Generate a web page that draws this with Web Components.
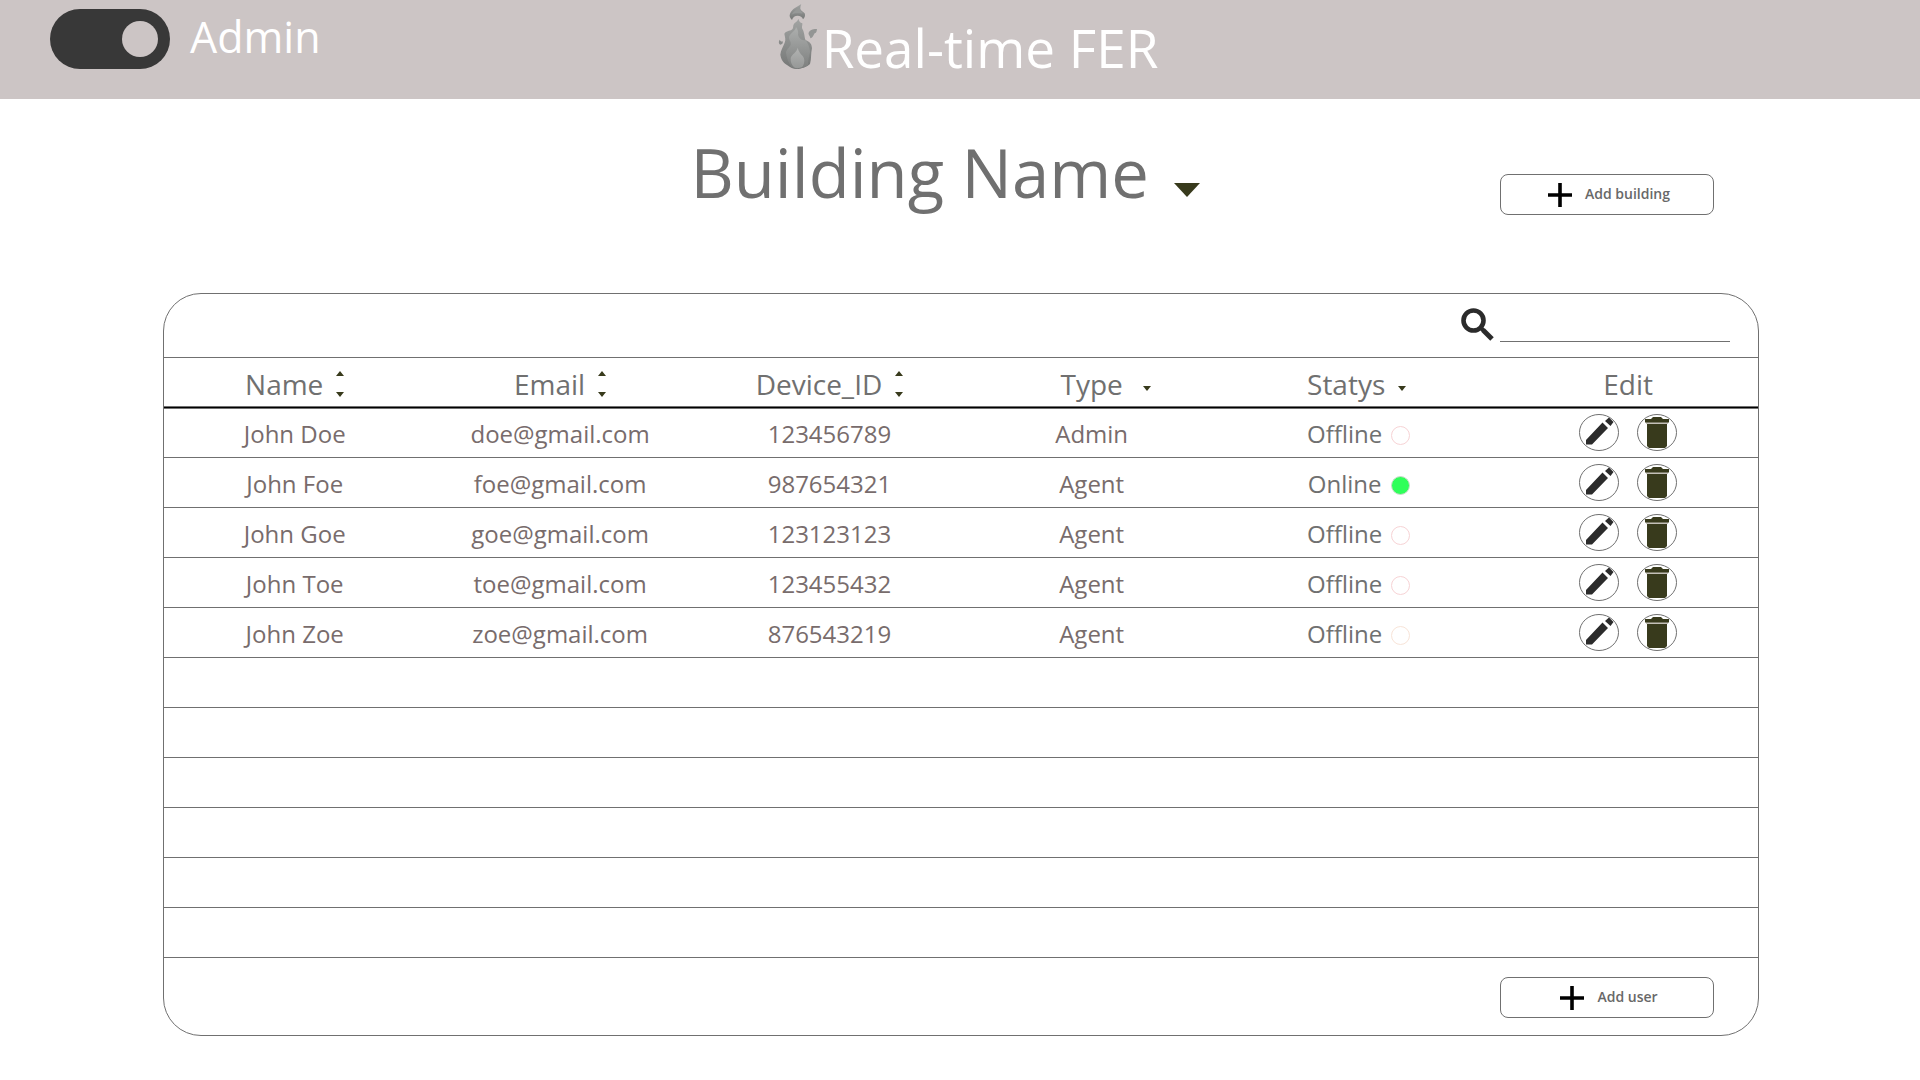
<!DOCTYPE html>
<html lang="en">
<head>
<meta charset="utf-8">
<title>Real-time FER</title>
<style>
  html, body { margin: 0; background: #fff; }
  body {
    font-family: "Open Sans", "Noto Sans", sans-serif;
    color: #707070;
    --line: #707070;
    --olive: #383a1c;
    --body-text: #786c6c;
  }
</style>
</head>
<body>
<fer-app></fer-app>

<template id="t-app">
  <style>
    :host { display: flex; flex-direction: column; min-height: 100vh; }
    .title { display: grid; grid-template-columns: 1fr auto 1fr; align-items: start; height: 194px; box-sizing: border-box; padding: 28px 206px 0 176px; }
    building-select { grid-column: 2; }
    .title add-button { justify-self: end; margin-top: 47px; }
    user-panel { margin: 0 161px 44px 163px; }
  </style>
  <app-header><admin-switch slot="start">Admin</admin-switch><brand-mark>Real-time FER</brand-mark></app-header>
  <main>
    <section class="title">
      <building-select></building-select>
      <add-button>Add building</add-button>
    </section>
    <user-panel></user-panel>
  </main>
</template>

<template id="t-header">
  <style>
    :host { display: block; }
    header { display: grid; grid-template-columns: 1fr auto 1fr; align-items: start; height: 99px; padding: 0 50px; background: #ccc5c5; color: #fff; }
  </style>
  <header><slot name="start"></slot><slot></slot></header>
</template>

<template id="t-switch">
  <style>
    :host { display: block; padding-top: 7px; }
    label { display: inline-flex; align-items: start; gap: 20px; font-size: 43px; line-height: 60px; cursor: pointer; }
    input { appearance: none; margin: 2px 0 0; width: 120px; height: 60px; border-radius: 30px; background: #383838; padding: 12px; box-sizing: border-box; display: flex; }
    input:checked { justify-content: flex-end; }
    input::before { content: ""; width: 36px; height: 36px; border-radius: 50%; background: #ccc5c5; }
  </style>
  <label><input type="checkbox" role="switch" checked><span><slot></slot></span></label>
</template>

<template id="t-brand">
  <style>
    :host { display: flex; align-items: start; gap: 4px; padding-left: 16px; }
    svg { width: 40px; height: 70px; }
    h1 { margin: 18px 0 0; font-size: 53px; line-height: 60px; font-weight: 400; white-space: nowrap; }
  </style>
  <svg viewBox="24 0 120 210" aria-hidden="true">
    <defs>
      <linearGradient id="a" x1="0" y1="0" x2="0" y2="1"><stop offset="0" stop-color="#a2a4a3"/><stop offset="1" stop-color="#757776"/></linearGradient>
      <linearGradient id="b" x1="0" y1="0" x2="0" y2="1"><stop offset="0" stop-color="#adafae"/><stop offset="1" stop-color="#7d7f7e"/></linearGradient>
      <linearGradient id="c" x1="0" y1="0" x2="0" y2="1"><stop offset="0" stop-color="#b2b3b2"/><stop offset="1" stop-color="#969897"/></linearGradient>
    </defs>
    <path fill="url(#a)" d="M94 12C82 20 66 26 60 41C57 48 60 54 66 60C68 51 75 47 83 47C91 47 97 51 99 58C104 53 107 47 104 40C100 35 93 32 91 27C91 21 92 17 94 12Z"/>
    <path fill="#979998" d="M90 20C80 28 69 34 65 44C75 37 88 41 100 40C92 33 88 29 90 20Z"/>
    <path fill="url(#a)" d="M85 56C83 66 72 67 70 76C69 82 70 88 63 91C54 94 47 94 43 101C45 111 48 119 44 128C40 139 32 151 31 164C33 177 38 187 51 195C62 203 69 207 80 207C96 207 111 200 120 192C125 176 122 161 126 145C125 132 121 127 108 121C103 117 105 104 99 90C93 82 98 77 97 70C90 68 87 63 85 56Z"/>
    <path fill="url(#b)" d="M78 81C76 95 57 101 57 113C57 120 64 125 62 134C58 143 49 148 48 158C50 174 55 187 64 200C77 209 101 206 114 195C114 181 117 171 120 156C120 144 114 130 107 120C93 123 88 114 84 105C86 96 83 88 78 81Z"/>
    <path fill="url(#c)" d="M83 143C81 156 65 163 62 174C61 187 66 195 72 202C80 207 94 204 99 198C105 187 104 175 98 168C90 160 86 154 83 143Z"/>
    <path fill="#939594" d="M141 87C130 86 118 91 116 98C114 105 121 107 121 115C129 114 130 105 134 100C140 98 140 93 141 87Z"/>
    <path fill="#898b8a" d="M29 119C25 125 26 132 31 134C36 134 40 130 38 124C34 125 31 123 29 119Z"/>
  </svg>
  <h1><slot></slot></h1>
</template>

<template id="t-building">
  <style>
    :host { display: block; }
    div { display: grid; align-items: end; }
    select, svg { grid-area: 1 / 1; }
    select { appearance: none; border: 0; margin: 0; padding: 0 50px 0 0; background: none; font: inherit; font-size: 67px; line-height: 90px; height: 90px; color: #707070; cursor: pointer; }
    svg { justify-self: end; width: 26px; height: 14px; margin-bottom: 20px; fill: var(--olive); pointer-events: none; }
  </style>
  <div>
    <select aria-label="Building"><option>Building Name</option></select>
    <svg viewBox="0 0 26 14" aria-hidden="true"><path d="M0 0H26L13 14Z"/></svg>
  </div>
</template>

<template id="t-add">
  <style>
    :host { display: block; }
    button { display: flex; align-items: center; justify-content: center; gap: 13px; width: 214px; height: 41px; border: 1px solid var(--line); border-radius: 8px; background: #fff; padding: 0 0 0 4px; font: inherit; font-size: 14px; line-height: 20px; font-weight: 600; color: #686868; cursor: pointer; }
    svg { width: 24px; height: 24px; stroke: #000; stroke-width: 3.6; }
    span { padding-bottom: 1px; }
  </style>
  <button type="button"><svg viewBox="0 0 24 24" aria-hidden="true"><path d="M12 0V24M0 12H24"/></svg><span><slot></slot></span></button>
</template>

<template id="t-search">
  <style>
    :host { display: block; }
    label { display: flex; align-items: start; gap: 6px; }
    svg { width: 33px; height: 33px; margin-top: 2px; }
    input { width: 230px; height: 36px; box-sizing: border-box; border: 0; border-bottom: 1px solid var(--line); border-radius: 0; padding: 0 4px; background: none; font: inherit; font-size: 24px; color: inherit; outline: 0; }
  </style>
  <label>
    <svg viewBox="0 0 33 33" fill="none" stroke="#2b2b2b" aria-hidden="true"><circle cx="12.5" cy="12.5" r="10" stroke-width="4.6"/><path d="M20 20L22.500 22.500" stroke-width="4"/><path d="M22 22L31 31" stroke-width="5"/></svg>
    <input type="text" aria-label="Search">
  </label>
</template>

<template id="t-heading">
  <style>
    :host { display: block; }
    button { display: flex; align-items: center; justify-content: center; gap: 13px; width: 100%; border: 0; margin: 0; padding: 2px 0 0; background: none; font: inherit; font-size: 28px; line-height: 38px; color: #707070; cursor: pointer; }
    svg { width: 8px; height: 26px; fill: var(--olive); }
    .down { display: none; }
    :host([kind="filter"]) .sort, :host([kind="plain"]) .sort { display: none; }
    :host([kind="filter"]) .down { display: block; }
    :host([kind="filter"]) button { padding-right: 4px; }
    :host([balanced]) button { display: grid; grid-template-columns: 1fr auto 1fr; gap: 20px; padding-right: 0; }
    :host([balanced]) span { grid-column: 2; }
  </style>
  <button type="button"><span><slot></slot></span>
    <svg class="sort" viewBox="0 0 8 26" aria-hidden="true"><path d="M0 5L4 0L8 5ZM0 21H8L4 26Z"/></svg>
    <svg class="down" viewBox="0 0 8 26" aria-hidden="true"><path d="M0 15H8L4 20Z"/></svg>
  </button>
</template>

<template id="t-status">
  <style>
    :host { display: flex; align-items: center; justify-content: center; gap: 9px; color: #707070; }
    i { width: 17px; height: 17px; margin-top: 4px; border: 1px solid #f7d3d5; border-radius: 50%; }
    :host([state="online"]) i { background: #2fff5a; border-color: #c9dcc9; }
    :host([state="idle"]) i { border-color: #f8e4d8; }
  </style>
  <span><slot></slot></span><i></i>
</template>

<template id="t-actions">
  <style>
    :host { display: flex; justify-content: center; gap: 18px; }
    button { border: 0; padding: 0; margin: 0; background: none; display: block; cursor: pointer; }
    svg { display: block; width: 40px; height: 37px; }
    ellipse { fill: #fff; stroke: #707070; }
  </style>
  <button type="button" aria-label="Edit user"><svg viewBox="0 0 40 37"><ellipse cx="20" cy="18.500" rx="19.500" ry="18"/><path fill="#2b2b2b" d="M7 30.500V26L23.500 8.500L29 14L13 30.500ZM26 7L30 3.500L34.500 8L31.500 12Z"/></svg></button>
  <button type="button" aria-label="Delete user"><svg viewBox="0 0 40 37"><ellipse cx="20" cy="18.500" rx="19.500" ry="18"/><path fill="#c4c0b8" d="M9 8H31V10H9Z"/><path fill="#383a1c" d="M8 5H14L16 3H24L26 5H32V8.500H8ZM10 10H30V32L28 34H12L10 32Z"/></svg></button>
</template>

<template id="t-panel">
  <style>
    :host { display: block; border: 1px solid var(--line); border-radius: 38px; }
    .bar { display: flex; justify-content: flex-end; align-items: flex-end; height: 63px; box-sizing: border-box; padding: 0 28px 15px; }
    .foot { display: flex; justify-content: flex-end; align-items: center; height: 77px; box-sizing: border-box; padding: 2px 44px 0; }
    table { width: 100%; table-layout: fixed; border-collapse: separate; border-spacing: 0; font-size: 24px; line-height: 32px; }
    th, td { box-sizing: border-box; height: 50px; padding: 0; text-align: center; border-bottom: 1px solid var(--line); font-weight: 400; }
    th { height: 51px; border-top: 1px solid var(--line); border-bottom-color: #000; box-shadow: 0 1px var(--line), inset 0 -1px var(--line); }
    td { color: var(--body-text); }
    td:not(:last-child) { padding-top: 2px; }
    th:nth-child(1) { width: 16.4%; } th:nth-child(2) { width: 16.9%; } th:nth-child(3) { width: 16.9%; }
    th:nth-child(4) { width: 16%; } th:nth-child(5) { width: 17.5%; } th:nth-child(6) { width: 16.3%; }
  </style>
  <div class="bar"><search-box></search-box></div>
  <table>
    <thead><tr>
      <th><column-heading>Name</column-heading></th>
      <th><column-heading>Email</column-heading></th>
      <th><column-heading>Device_ID</column-heading></th>
      <th><column-heading kind="filter" balanced>Type</column-heading></th>
      <th><column-heading kind="filter">Statys</column-heading></th>
      <th><column-heading kind="plain">Edit</column-heading></th>
    </tr></thead>
    <tbody></tbody>
  </table>
  <div class="foot"><add-button>Add user</add-button></div>
</template>

<script>
  const users = [
    ["John Doe", "doe@gmail.com", "123456789", "Admin", "Offline", "offline"],
    ["John Foe", "foe@gmail.com", "987654321", "Agent", "Online", "online"],
    ["John Goe", "goe@gmail.com", "123123123", "Agent", "Offline", "offline"],
    ["John Toe", "toe@gmail.com", "123455432", "Agent", "Offline", "offline"],
    ["John Zoe", "zoe@gmail.com", "876543219", "Agent", "Offline", "idle"]
  ];
  const pageSize = 11;

  class Base extends HTMLElement {
    constructor() {
      super();
      this.attachShadow({ mode: "open" }).append(
        document.getElementById(this.constructor.template).content.cloneNode(true));
    }
  }
  class StatusBadge extends Base { static template = "t-status"; }
  class RowActions extends Base { static template = "t-actions"; }
  class ColumnHeading extends Base { static template = "t-heading"; }
  class SearchBox extends Base { static template = "t-search"; }
  class AddButton extends Base { static template = "t-add"; }
  class BuildingSelect extends Base { static template = "t-building"; }
  class BrandMark extends Base { static template = "t-brand"; }
  class AdminSwitch extends Base { static template = "t-switch"; }
  class AppHeader extends Base { static template = "t-header"; }
  class FerApp extends Base { static template = "t-app"; }
  class UserPanel extends Base {
    static template = "t-panel";
    connectedCallback() {
      const body = this.shadowRoot.querySelector("tbody");
      body.replaceChildren();
      for (let i = 0; i < pageSize; i++) {
        const row = body.insertRow();
        const user = users[i];
        for (let c = 0; c < 6; c++) {
          const cell = row.insertCell();
          if (!user) continue;
          if (c < 4) cell.textContent = user[c];
          else if (c === 4) {
            const badge = document.createElement("status-badge");
            badge.setAttribute("state", user[5]);
            badge.textContent = user[4];
            cell.append(badge);
          } else cell.append(document.createElement("row-actions"));
        }
      }
    }
  }
  customElements.define("status-badge", StatusBadge);
  customElements.define("row-actions", RowActions);
  customElements.define("column-heading", ColumnHeading);
  customElements.define("search-box", SearchBox);
  customElements.define("add-button", AddButton);
  customElements.define("building-select", BuildingSelect);
  customElements.define("brand-mark", BrandMark);
  customElements.define("admin-switch", AdminSwitch);
  customElements.define("app-header", AppHeader);
  customElements.define("user-panel", UserPanel);
  customElements.define("fer-app", FerApp);
</script>
</body>
</html>
